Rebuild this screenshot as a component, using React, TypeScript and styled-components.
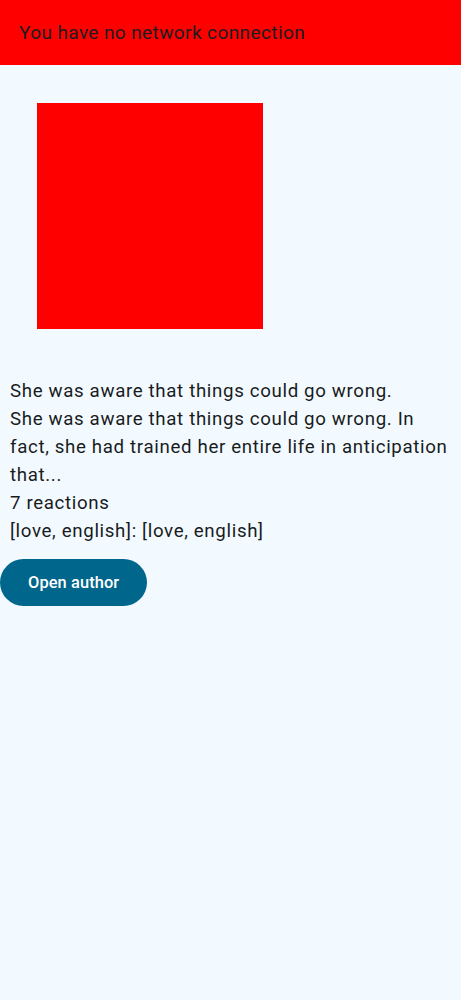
import React from 'react'
import styled, {createGlobalStyle} from 'styled-components'

const GlobalStyle = createGlobalStyle`
  html, body {
    margin: 0;
    padding: 0;
    background: #f3faff;
  }
  body {
    font-family: Roboto, "Noto Sans", sans-serif;
  }
`

const Screen = styled.div`
  display: flex;
  flex-direction: column;
  min-height: 1000px;
  background: #f3faff;
`

const Banner = styled.header`
  background: #ff0000;
  height: 65px;
  display: flex;
  align-items: center;
  padding: 0 19px;
  color: #1b1c1f;
  font-size: 19px;
  letter-spacing: 0.4px;
`

const Thumbnail = styled.div`
  width: 226px;
  height: 226px;
  margin: 38px 0 0 37px;
  background: #ff0000;
`

const Body = styled.section`
  margin-top: 48px;
  padding: 0 10px;
  color: #191c1e;
  font-size: 18.7px;
  line-height: 28px;
  letter-spacing: 0.65px;
`

const Line = styled.div``

const Button = styled.button`
  align-self: flex-start;
  margin-top: 14px;
  height: 47px;
  padding: 0 28px;
  border: none;
  border-radius: 24px;
  background: #00668b;
  color: #ffffff;
  font-family: Roboto, sans-serif;
  font-weight: 500;
  font-size: 16.4px;
  letter-spacing: 0.1px;
`

export default function App() {
    return (
        <Screen>
            <GlobalStyle/>
            <Banner>You have no network connection</Banner>
            <Thumbnail/>
            <Body>
                <Line>She was aware that things could go wrong.</Line>
                <Line>She was aware that things could go wrong. In fact, she had trained her entire life in anticipation that...</Line>
                <Line>7 reactions</Line>
                <Line>[love, english]: [love, english]</Line>
            </Body>
            <Button>Open author</Button>
        </Screen>
    )
}
